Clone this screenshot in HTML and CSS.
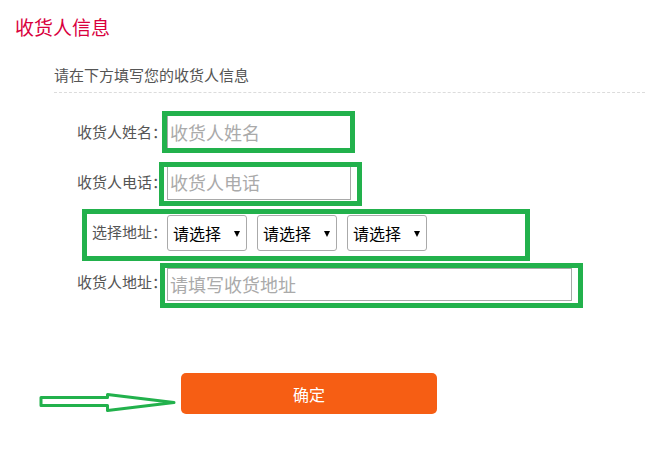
FILE: index.html
```html
<!DOCTYPE html>
<html lang="zh-CN">
<head>
<meta charset="utf-8">
<title>收货人信息</title>
<link rel="stylesheet" href="styles.css">
</head>
<body>
<div class="page">
  <h1 class="title">收货人信息</h1>
  <p class="subtitle">请在下方填写您的收货人信息</p>
  <form class="form">
    <div class="row">
      <label class="label">收货人姓名：</label>
      <input class="field field-short" type="text" placeholder="收货人姓名">
      <span class="mark mark-1"></span>
    </div>
    <div class="row">
      <label class="label">收货人电话：</label>
      <input class="field field-short" type="text" placeholder="收货人电话">
      <span class="mark mark-2"></span>
    </div>
    <div class="row">
      <label class="label">选择地址：</label>
      <div class="selects">
        <span class="select-wrap"><select class="select"><option>请选择</option></select></span>
        <span class="select-wrap"><select class="select"><option>请选择</option></select></span>
        <span class="select-wrap"><select class="select"><option>请选择</option></select></span>
      </div>
      <span class="mark mark-3"></span>
    </div>
    <div class="row">
      <label class="label">收货人地址：</label>
      <input class="field field-long" type="text" placeholder="请填写收货地址">
      <span class="mark mark-4"></span>
    </div>
    <div class="submit-row">
      <svg class="arrow" width="143" height="41" viewBox="0 0 143 41">
        <polygon points="3,24.5 69.5,24.5 69.5,21.5 136,29.5 69.5,37.5 69.5,32.5 3,32.5" fill="none" stroke="#22b14c" stroke-width="3" stroke-linejoin="round"/>
      </svg>
      <button class="btn" type="button">确定</button>
    </div>
  </form>
</div>
</body>
</html>
```
FILE: styles.css
```css
* { box-sizing: border-box; }

html, body {
  margin: 0;
  padding: 0;
  background: #fff;
}

body {
  font-family: "Noto Sans CJK SC", "Microsoft YaHei", sans-serif;
  color: #555;
}

.page {
  width: 647px;
  height: 474px;
  overflow: hidden;
}

.title {
  margin: 0;
  padding: 17px 0 0 15px;
  font-size: 19px;
  line-height: 20px;
  font-weight: normal;
  color: #d9003d;
}

.subtitle {
  margin: 28px 2px 0 54px;
  padding-bottom: 7px;
  font-size: 15px;
  line-height: 20px;
  color: #555;
  border-bottom: 1px dashed #dcdcdc;
}

.form {
  margin-top: 14px;
}

.row {
  position: relative;
  display: flex;
  align-items: center;
  height: 50px;
}

.label {
  width: 167px;
  flex: none;
  text-align: right;
  font-size: 15px;
  line-height: 20px;
  color: #555;
}

.field {
  height: 35px;
  padding: 0 2px;
  border: 1px solid #a9a9a9;
  font-family: inherit;
  font-size: 18px;
  color: #333;
  background: #fff;
  outline: none;
}

.field::placeholder {
  color: #aaa;
}

.field-short {
  width: 184px;
}

.field-long {
  width: 405px;
  height: 33px;
  margin-top: 4px;
}

.selects {
  display: flex;
  gap: 10px;
  margin-top: 2px;
}

.select-wrap {
  position: relative;
  display: block;
}

.select-wrap::after {
  content: "";
  position: absolute;
  right: 7px;
  top: 16px;
  width: 0;
  height: 0;
  border-left: 3px solid transparent;
  border-right: 3px solid transparent;
  border-top: 6px solid #000;
  pointer-events: none;
}

.select {
  appearance: none;
  -webkit-appearance: none;
  display: block;
  width: 80px;
  height: 36px;
  padding: 0 0 0 5px;
  border: 1px solid #aaa;
  border-radius: 3px;
  background: #fff;
  font-family: inherit;
  font-size: 16px;
  color: #000;
}

.mark {
  position: absolute;
  border: 5px solid #22b14c;
  pointer-events: none;
}

.mark-1 { left: 162px; top: 4px; width: 193px; height: 42px; }
.mark-2 { left: 159px; top: 5px; width: 203px; height: 44px; }
.mark-3 { left: 82px;  top: 2px; width: 448px; height: 52px; }
.mark-4 { left: 160px; top: 6px; width: 423px; height: 45px; }

.submit-row {
  display: flex;
  align-items: center;
  margin-top: 66px;
  padding-left: 38px;
}

.arrow {
  display: block;
  flex: none;
}

.btn {
  width: 256px;
  height: 41px;
  border: none;
  border-radius: 5px;
  background: #f65e14;
  color: #fff;
  font-family: inherit;
  font-size: 16px;
  cursor: pointer;
}
```
